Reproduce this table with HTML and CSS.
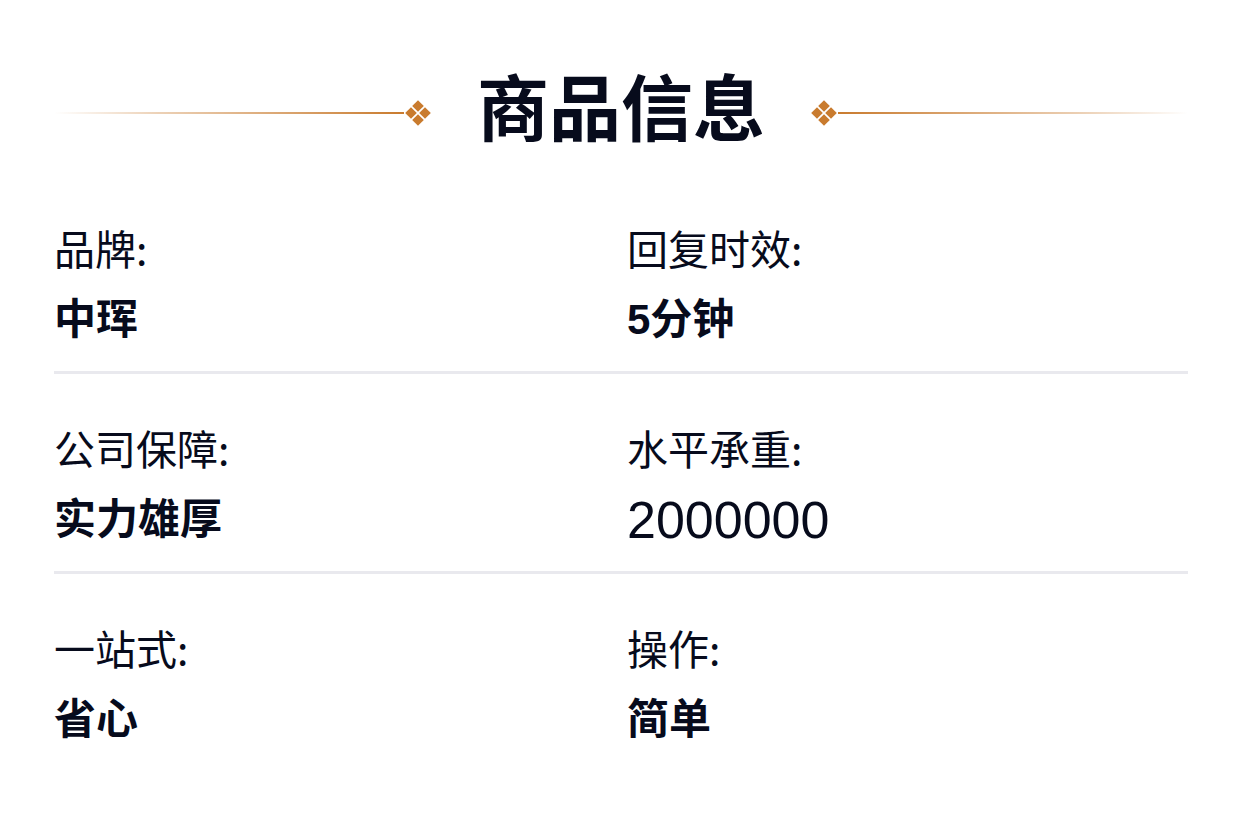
FILE: index.html
```html
<!DOCTYPE html>
<html lang="zh-CN">
<head>
<meta charset="utf-8">
<title>商品信息</title>
<link rel="stylesheet" href="styles.css">
</head>
<body>
<main class="page">
  <header class="heading">
    <span class="line line-left"></span>
    <svg class="orn" viewBox="0 0 28 28" width="28" height="28" aria-hidden="true">
      <polygon points="14,1.2 19.8,7 14,12.8 8.2,7"/>
      <polygon points="7,8.2 12.8,14 7,19.8 1.2,14"/>
      <polygon points="21,8.2 26.8,14 21,19.8 15.2,14"/>
      <polygon points="14,15.2 19.8,21 14,26.8 8.2,21"/>
    </svg>
    <h1 class="title">商品信息</h1>
    <svg class="orn" viewBox="0 0 28 28" width="28" height="28" aria-hidden="true">
      <polygon points="14,1.2 19.8,7 14,12.8 8.2,7"/>
      <polygon points="7,8.2 12.8,14 7,19.8 1.2,14"/>
      <polygon points="21,8.2 26.8,14 21,19.8 15.2,14"/>
      <polygon points="14,15.2 19.8,21 14,26.8 8.2,21"/>
    </svg>
    <span class="line line-right"></span>
  </header>

  <section class="rows">
    <div class="row">
      <div class="item">
        <div class="label">品牌:</div>
        <div class="value">中珲</div>
      </div>
      <div class="item">
        <div class="label">回复时效:</div>
        <div class="value">5分钟</div>
      </div>
    </div>
    <div class="row">
      <div class="item">
        <div class="label">公司保障:</div>
        <div class="value">实力雄厚</div>
      </div>
      <div class="item">
        <div class="label">水平承重:</div>
        <div class="value value-num">2000000</div>
      </div>
    </div>
    <div class="row row-last">
      <div class="item">
        <div class="label">一站式:</div>
        <div class="value">省心</div>
      </div>
      <div class="item">
        <div class="label">操作:</div>
        <div class="value">简单</div>
      </div>
    </div>
  </section>
</main>
</body>
</html>
```

FILE: styles.css
```css
* {
  box-sizing: border-box;
}

html, body {
  margin: 0;
  padding: 0;
  background: #ffffff;
}

body {
  font-family: "Liberation Sans", "Noto Sans CJK SC", sans-serif;
  color: #070b1c;
}

.page {
  width: 1242px;
  padding: 64px 54px 0;
}

.heading {
  display: flex;
  align-items: center;
  height: 98px;
}

.line {
  flex: 1;
  height: 2px;
}

.line-left {
  background: linear-gradient(to right, rgba(201, 123, 46, 0) 0%, rgba(201, 123, 46, 0.35) 30%, #c97b2e 100%);
}

.line-right {
  background: linear-gradient(to left, rgba(201, 123, 46, 0) 0%, rgba(201, 123, 46, 0.35) 30%, #c97b2e 100%);
}

.orn {
  display: block;
  flex: none;
  fill: #c97b2e;
}

.title {
  margin: 0 45px 18px;
  font-family: "Noto Sans CJK SC", sans-serif;
  font-size: 72px;
  line-height: 80px;
  font-weight: 700;
  letter-spacing: 0;
}

.rows {
  margin-top: 60px;
}

.row {
  display: grid;
  grid-template-columns: 573px 1fr;
  padding-bottom: 26px;
  border-bottom: 3px solid #e9e9ee;
  margin-bottom: 48px;
}

.row-last {
  border-bottom: none;
}

.label {
  font-family: "Noto Sans CJK SC", sans-serif;
  font-size: 41px;
  line-height: 50px;
  font-weight: 400;
}

.value {
  margin-top: 23px;
  font-family: "Liberation Sans", "Noto Sans CJK SC", sans-serif;
  font-size: 42px;
  line-height: 50px;
  font-weight: 700;
}

.value-num {
  font-size: 52px;
  font-weight: 400;
}
```
